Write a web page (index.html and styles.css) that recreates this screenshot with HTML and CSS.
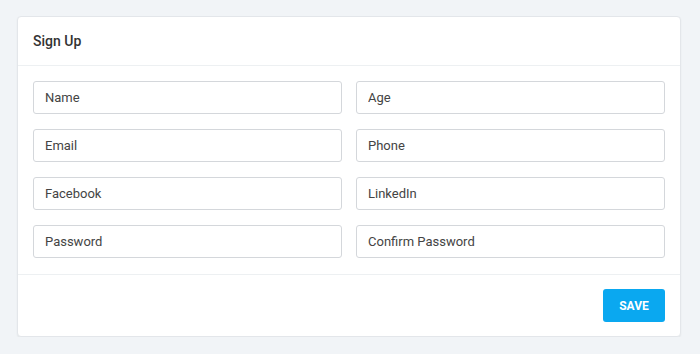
FILE: index.html
```html
<!DOCTYPE html>
<html lang="en">
<head>
    <meta charset="UTF-8">
    <meta name="viewport" content="width=device-width, initial-scale=1.0">
    <title>Sign Up</title>
    <link rel="stylesheet" href="styles.css">
</head>
<body>
    <div class="card">
        <div class="card-header">Sign Up</div>
        <div class="card-body">
            <input class="field" type="text" placeholder="Name">
            <input class="field" type="text" placeholder="Age">
            <input class="field" type="email" placeholder="Email">
            <input class="field" type="text" placeholder="Phone">
            <input class="field" type="text" placeholder="Facebook">
            <input class="field" type="text" placeholder="LinkedIn">
            <input class="field" type="password" placeholder="Password">
            <input class="field" type="password" placeholder="Confirm Password">
        </div>
        <div class="card-footer">
            <button class="save-btn">Save</button>
        </div>
    </div>
</body>
</html>
```

FILE: styles.css
```css
body {
    font-family: Roboto, "Liberation Sans", sans-serif;
    margin: 0;
    padding: 16px 19px 0 17px;
    background-color: #f1f4f7;
}
.card {
    background-color: white;
    border: 1px solid #e3e6ea;
    border-radius: 4px;
    box-shadow: 0 1px 2px rgba(0,0,0,0.06);
}
.card-header {
    height: 48px;
    padding: 0 15px;
    display: flex;
    align-items: center;
    font-size: 14px;
    font-weight: 500;
    color: #333;
    border-bottom: 1px solid #edf0f2;
}
.card-body {
    display: grid;
    grid-template-columns: 1fr 1fr;
    gap: 15px 14px;
    padding: 15px 15px 16px 15px;
    border-bottom: 1px solid #edf0f2;
}
.field {
    height: 33px;
    box-sizing: border-box;
    padding: 0 11px;
    border: 1px solid #d4d7db;
    border-radius: 3px;
    font-family: inherit;
    font-size: 13px;
    color: #333;
    min-width: 0;
}
.field::placeholder {
    color: #444;
}
.card-footer {
    display: flex;
    justify-content: flex-end;
    padding: 14px 15px 14px;
}
.save-btn {
    width: 62px;
    height: 33px;
    background-color: #0aa8f0;
    color: white;
    border: none;
    border-radius: 3px;
    font-family: inherit;
    font-size: 12px;
    font-weight: 700;
    text-transform: uppercase;
    cursor: pointer;
}
```
